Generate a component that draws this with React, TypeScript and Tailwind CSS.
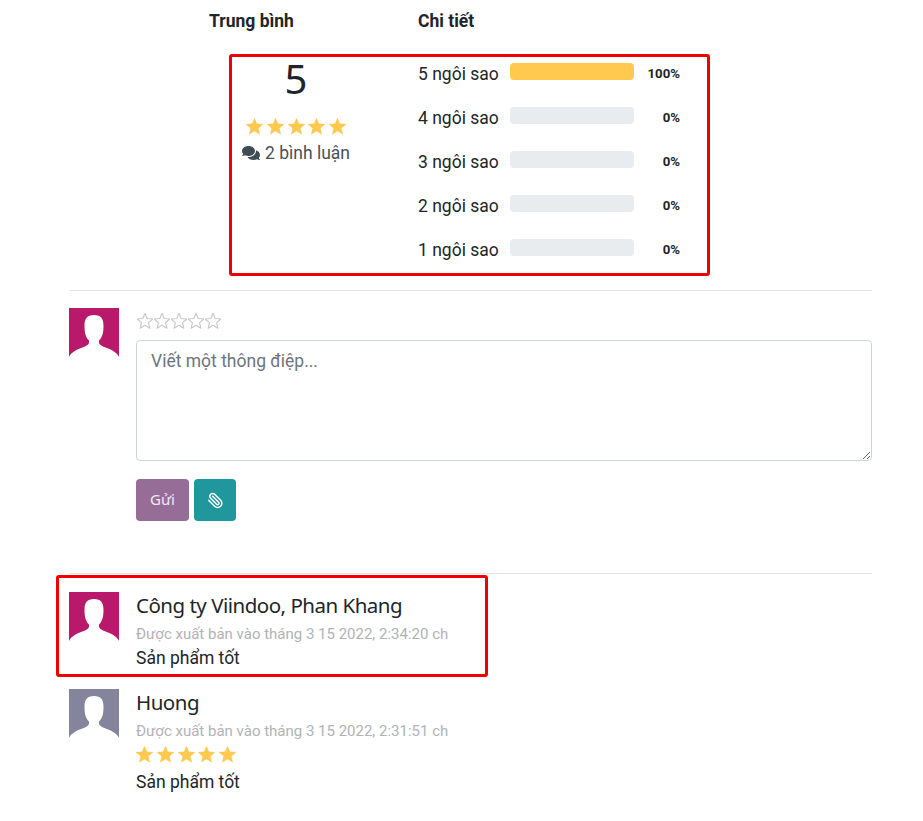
import React from "react";
import { FaComments } from "react-icons/fa";
import { Paperclip } from "lucide-react";

const rows = [
  { label: "5 ngôi sao", pct: 100 },
  { label: "4 ngôi sao", pct: 0 },
  { label: "3 ngôi sao", pct: 0 },
  { label: "2 ngôi sao", pct: 0 },
  { label: "1 ngôi sao", pct: 0 },
];

const STAR = "12,0.5 15.29,8.27 23.9,8.94 17.33,14.53 19.35,22.9 12,18.4 4.65,22.9 6.67,14.53 0.1,8.94 8.71,8.27";

function Stars() {
  return (
    <div className="flex h-[20px] items-center gap-[3.750px]">
      {[0, 1, 2, 3, 4].map((i) => (
        <svg key={i} viewBox="0 0 24 24" className="h-[17px] w-[17px]">
          <polygon points={STAR} fill="#ffc84f" stroke="#ffc84f" strokeWidth="0.6" strokeLinejoin="round" />
        </svg>
      ))}
    </div>
  );
}

function Avatar({ className }: { className: string }) {
  return (
    <svg viewBox="0 0 50 50" className={`h-[50px] w-[50px] shrink-0 ${className}`}>
      <path
        fill="#fff"
        d="M0 50V49C2 44 9 41 16 38.500C19.500 37 20.500 35 20 32.500C16.500 29 15.500 24.500 15.500 18C15.500 10.500 18 7 25 7C32 7 34.500 10.500 34.500 18C34.500 24.500 33.500 29 30 32.500C29.500 35 30.500 37 34 38.500C41 41 48 44 50 49V50Z"
      />
    </svg>
  );
}

function Comment({
  name,
  date,
  color,
  stars,
  className,
}: {
  name: string;
  date: string;
  color: string;
  stars?: boolean;
  className?: string;
}) {
  return (
    <div className={`flex gap-[17px] ${className ?? ""}`}>
      <Avatar className={color} />
      <div className="flex flex-col">
        <div className="h-[27px] font-['Noto_Sans',sans-serif] text-[20.500px] leading-[27px] tracking-[-0.5px] text-[#212529]">
          {name}
        </div>
        <div className="mt-[4px] h-[22px] text-[15px] leading-[22px] text-[#b0b3b6]">{date}</div>
        {stars && (
          <div className="mt-[2px]">
            <Stars />
          </div>
        )}
        <div className={`h-[24px] text-[17.500px] leading-[26px] text-[#212529] ${stars ? "mt-[5px]" : ""}`}>
          Sản phẩm tốt
        </div>
      </div>
    </div>
  );
}

export default function App() {
  return (
    <div className="relative min-h-[821px] bg-white pl-[69px] pr-[51px] font-['Roboto',sans-serif] text-[#212529]">
      {/* summary */}
      <div className="flex h-[290px] flex-col">
        <div className="flex h-[42px] items-center pl-[140px] text-[17.500px] font-bold">
          <span className="w-[209px]">Trung bình</span>
          <span>Chi tiết</span>
        </div>
        <div className="flex pl-[177px]">
          <div className="flex w-[100px] flex-col items-center">
            <div className="mt-[10px] h-[54px] font-['Noto_Sans',sans-serif] text-[40px] leading-[54px]">5</div>
            <div className="mt-[10px]">
              <Stars />
            </div>
            <div className="mt-[5px] flex h-[24px] items-center gap-[5px] whitespace-nowrap text-[17.500px] text-[#495057]">
              <FaComments size={18} className="text-[#3f4b57]" />
              2 bình luận
            </div>
          </div>
          <div className="ml-[72px] mt-[21px] flex flex-col">
            {rows.map((r) => (
              <div key={r.label} className="flex h-[44px] items-start">
                <span className="w-[92px] whitespace-nowrap text-[17.500px] leading-[22px]">{r.label}</span>
                <div className="h-[17px] w-[124px] overflow-hidden rounded-[4px] bg-[#e9ecef]">
                  <div className="h-full bg-[#ffc84f]" style={{ width: `${r.pct}%` }} />
                </div>
                <span className="w-[46px] text-right text-[13.200px] font-bold leading-[21px]">{r.pct}%</span>
              </div>
            ))}
          </div>
        </div>
      </div>

      {/* composer */}
      <div className="h-[284px] border-y border-[#e5e5e5] pt-[17px]">
        <div className="flex gap-[17px]">
          <Avatar className="bg-[#b8196b]" />
          <div className="flex flex-1 flex-col">
            <div className="mt-[3px] flex h-[19px] items-center">
              {[0, 1, 2, 3, 4].map((i) => (
                <span key={i} className="flex w-[17.200px] justify-center">
                  <svg viewBox="0 0 24 24" className="h-[16px] w-[16px]">
                    <polygon points={STAR} fill="none" stroke="#c8c8c8" strokeWidth="1.700" strokeLinejoin="round" />
                  </svg>
                </span>
              ))}
            </div>
            <textarea
              readOnly
              placeholder="Viết một thông điệp..."
              className="mt-[10px] h-[121px] w-full resize-y rounded-[4px] border border-[#ced4da] px-[14px] py-[7px] text-[17.500px] leading-[26px] placeholder:text-[#6c757d]"
            />
            <div className="mt-[18px] flex gap-[5px]">
              <button className="h-[42px] w-[53px] rounded-[4px] bg-[#966d97] pb-[2px] font-['Noto_Sans',sans-serif] text-[15px] text-[#f3e8f3]">
                Gửi
              </button>
              <button className="flex h-[42px] w-[42px] items-center justify-center rounded-[4px] bg-[#1f979c] text-white">
                <Paperclip size={17} strokeWidth={2} className="-scale-x-100" />
              </button>
            </div>
          </div>
        </div>
      </div>

      {/* comments */}
      <Comment
        className="mt-[18px]"
        name="Công ty Viindoo, Phan Khang"
        date="Được xuất bản vào tháng 3 15 2022, 2:34:20 ch"
        color="bg-[#b8196b]"
      />
      <Comment
        className="mt-[20px]"
        name="Huong"
        date="Được xuất bản vào tháng 3 15 2022, 2:31:51 ch"
        color="bg-[#84849c]"
        stars
      />

      {/* red annotation boxes */}
      <div className="absolute left-[229px] top-[54px] h-[222px] w-[481px] rounded-[3px] border-[3px] border-[#f00000]" />
      <div className="absolute left-[56px] top-[575px] h-[102px] w-[432px] rounded-[3px] border-[3px] border-[#f00000]" />
    </div>
  );
}
